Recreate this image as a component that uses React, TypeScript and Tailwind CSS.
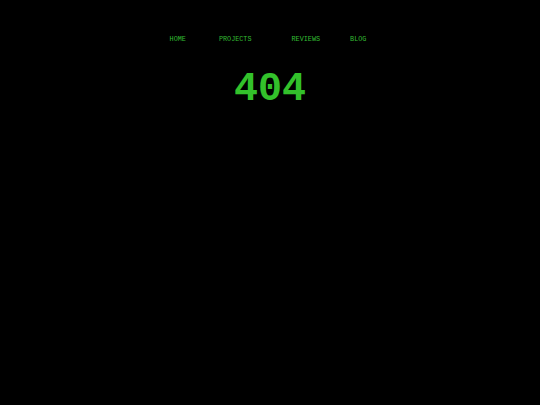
export default function App() {
  return (
    <div className="w-[540px] h-[405px] bg-black overflow-hidden" style={{ fontFamily: '"Liberation Mono", "DejaVu Sans Mono", monospace' }}>
      <nav className="flex justify-center pt-[35px] pr-[4px] text-[6.8px] leading-[8px] text-[#33bb33]">
        <div className="flex">
          <span>HOME</span>
          <span className="ml-[33px]">PROJECTS</span>
          <span className="ml-[40px]">REVIEWS</span>
          <span className="ml-[30px]">BLOG</span>
        </div>
      </nav>
      <h1 className="mt-[24px] text-center font-bold text-[40px] leading-[46px] text-[#33c12b]">404</h1>
    </div>
  );
}
